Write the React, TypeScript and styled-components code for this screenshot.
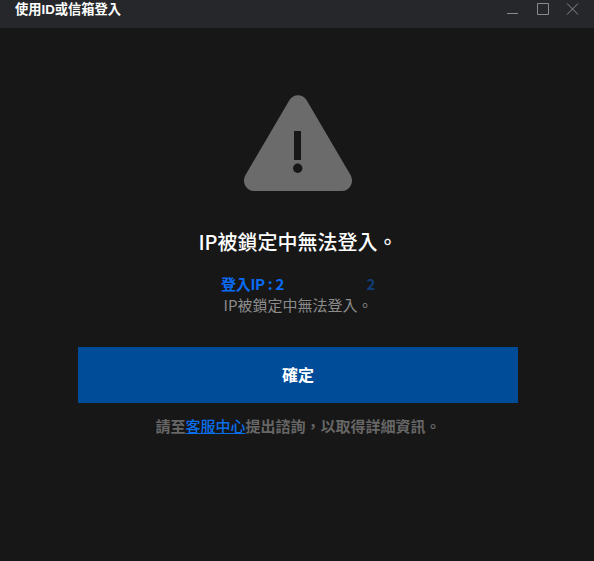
import React from "react";
import styled, { createGlobalStyle } from "styled-components";

const GlobalStyle = createGlobalStyle`
  html,
  body {
    margin: 0;
    height: 100%;
    background: #171717;
  }

  #root {
    height: 100%;
  }
`;

const fontStack = `"Noto Sans CJK TC", "Liberation Sans", sans-serif`;

const Window = styled.div`
  display: flex;
  flex-direction: column;
  width: 594px;
  height: 561px;
  overflow: hidden;
  background: #171717;
  font-family: ${fontStack};
`;

const TitleBar = styled.header`
  display: flex;
  flex: 0 0 28px;
  align-items: flex-start;
  justify-content: space-between;
  padding-left: 15px;
  background: #25272a;
`;

const WindowTitle = styled.h1`
  margin: 0;
  color: #fff;
  font-family: "Liberation Sans", "Noto Sans CJK TC", sans-serif;
  font-size: 13.25px;
  font-weight: 700;
  line-height: 19px;
`;

const WindowControls = styled.div`
  display: flex;
  gap: 14px;
  padding: 3px 13px 0 0;
`;

const ControlIcon = styled.svg`
  display: block;
  width: 16px;
  height: 12px;
  fill: none;
  stroke: #8a8a8a;
  stroke-width: 1;
`;

const Content = styled.main`
  display: flex;
  flex: 1;
  flex-direction: column;
  align-items: center;
  padding: 67px 76px 0 78px;
`;

const WarningIcon = styled.svg`
  display: block;
  width: 110px;
  height: 98px;
`;

const Heading = styled.h2`
  margin: 34px 0 0;
  color: #fff;
  font-size: 20px;
  font-weight: 500;
  line-height: 30px;
`;

const IpLine = styled.p`
  display: flex;
  width: 154px;
  justify-content: space-between;
  margin: 17px 0 0;
  color: #0a6cf5;
  font-size: 15px;
  font-weight: 700;
  letter-spacing: -0.3px;
  line-height: 20px;
`;

const IpEnd = styled.span`
  color: #123c78;
`;

const Message = styled.p`
  margin: 1px 0 0;
  color: #8c8c8c;
  font-size: 15px;
  line-height: 20px;
`;

const ConfirmButton = styled.button`
  display: block;
  width: 440px;
  height: 56px;
  margin-top: 32px;
  padding: 0 0 2px;
  border: 0;
  background: #004c99;
  color: #fff;
  font-family: ${fontStack};
  font-size: 16px;
  font-weight: 700;
`;

const HelpText = styled.p`
  margin: 13px 0 0;
  color: #666;
  font-size: 15px;
  font-weight: 700;
  line-height: 20px;
`;

const HelpLink = styled.a`
  color: #0a6eeb;
  font-weight: 500;
  text-decoration: underline;
`;

const App = () => {
  return (
    <Window>
      <GlobalStyle />
      <TitleBar>
        <WindowTitle>使用ID或信箱登入</WindowTitle>
        <WindowControls>
          <ControlIcon viewBox="0 0 16 12">
            <path d="M2 10.5h11" />
          </ControlIcon>
          <ControlIcon viewBox="0 0 16 12">
            <path d="M2.5.5h11v11h-11z" />
          </ControlIcon>
          <ControlIcon viewBox="0 0 16 12">
            <path d="M2 .5l11 11M13 .5l-11 11" />
          </ControlIcon>
        </WindowControls>
      </TitleBar>
      <Content>
        <WarningIcon viewBox="0 0 110 98">
          <path
            fill="#6b6b6b"
            d="M46.500 5A10 10 0 0 1 63.500 5L107.500 80A10.500 10.500 0 0 1 99 96H11A10.500 10.500 0 0 1 2.500 80Z"
          />
          <path fill="#171717" d="M51 36h7v29h-7z" />
          <circle fill="#171717" cx="54.700" cy="73.300" r="4.700" />
        </WarningIcon>
        <Heading>IP被鎖定中無法登入。</Heading>
        <IpLine>
          <span>登入IP : 2</span>
          <IpEnd>2</IpEnd>
        </IpLine>
        <Message>IP被鎖定中無法登入。</Message>
        <ConfirmButton type="button">確定</ConfirmButton>
        <HelpText>
          請至<HelpLink href="#">客服中心</HelpLink>提出諮詢，以取得詳細資訊。
        </HelpText>
      </Content>
    </Window>
  );
};

export default App;
